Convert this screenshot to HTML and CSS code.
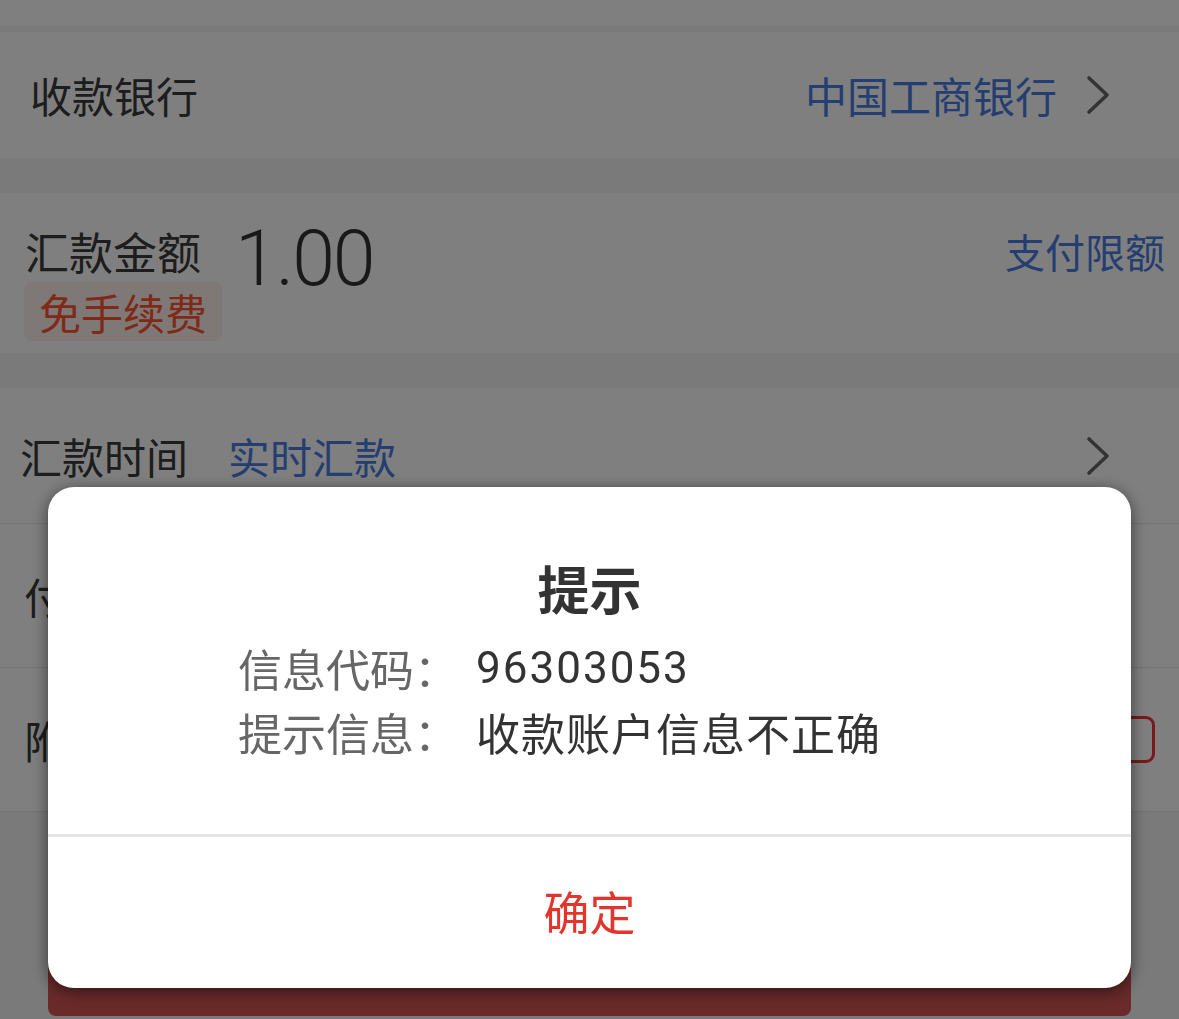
FILE: index.html
```html
<!DOCTYPE html>
<html lang="zh-CN">
<head>
<meta charset="utf-8">
<title>汇款</title>
<link rel="stylesheet" href="styles.css">
</head>
<body>
<div class="page">
  <div class="strip"></div>
  <div class="row row-bank">
    <span class="label">收款银行</span>
    <span class="right">
      <span class="link">中国工商银行</span>
      <svg class="chev" viewBox="0 0 26 40" width="26" height="40"><polyline points="4,3 22,20 4,37" fill="none" stroke="#666" stroke-width="3.6" stroke-linecap="round" stroke-linejoin="round"/></svg>
    </span>
  </div>
  <div class="row row-amount">
    <div class="amount-left">
      <div class="amount-line">
        <span class="label">汇款金额</span>
        <span class="amount">1.00</span>
      </div>
      <span class="badge">免手续费</span>
    </div>
    <span class="link limit">支付限额</span>
  </div>
  <div class="group">
    <div class="row row-time">
      <span class="time-left">
        <span class="label">汇款时间</span>
        <span class="link">实时汇款</span>
      </span>
      <svg class="chev" viewBox="0 0 26 40" width="26" height="40"><polyline points="4,3 22,20 4,37" fill="none" stroke="#666" stroke-width="3.6" stroke-linecap="round" stroke-linejoin="round"/></svg>
    </div>
    <div class="row row-plain">
      <span class="label">付款账户</span>
    </div>
    <div class="row row-plain row-note">
      <span class="label">附言</span>
      <span class="outline-box"></span>
    </div>
  </div>
  <div class="submit"></div>
</div>

<div class="mask"></div>

<div class="dialog">
  <div class="dialog-body">
    <div class="dialog-title">提示</div>
    <div class="dialog-line"><span class="dl-label">信息代码：</span><span class="dl-value num">96303053</span></div>
    <div class="dialog-line"><span class="dl-label">提示信息：</span><span class="dl-value msg">收款账户信息不正确</span></div>
  </div>
  <div class="dialog-btn">确定</div>
</div>
</body>
</html>
```

FILE: styles.css
```css
html, body {
  margin: 0;
  padding: 0;
}
body {
  width: 1179px;
  height: 1019px;
  overflow: hidden;
  background: #f4f4f4;
  font-family: "Noto Sans CJK SC", "Noto Sans", sans-serif;
  color: #3a3a3a;
}
.page {
  display: flex;
  flex-direction: column;
}
.strip {
  height: 26px;
  background: #fff;
  margin-bottom: 6px;
}
.row {
  background: #fff;
  display: flex;
  align-items: center;
  box-sizing: border-box;
}
.label {
  font-size: 42px;
  line-height: 44px;
  color: #3a3a3a;
}
.link {
  font-size: 42px;
  line-height: 44px;
  color: #4a7de2;
}
.chev {
  display: block;
  flex: none;
}
.row-bank {
  height: 126px;
  justify-content: space-between;
  padding: 0 68px 0 30px;
  margin-bottom: 35px;
}
.row-bank .right {
  display: flex;
  align-items: center;
  gap: 28px;
}
.row-amount {
  height: 160px;
  align-items: flex-start;
  justify-content: space-between;
  padding: 36px 14px 0 24px;
  margin-bottom: 35px;
}
.amount-left {
  display: flex;
  flex-direction: column;
  align-items: flex-start;
}
.amount-line {
  display: flex;
  align-items: flex-start;
  height: 44px;
}
.amount-line .label {
  padding-left: 1px;
  font-size: 44px;
}
.amount {
  font-family: Roboto, "Liberation Sans", sans-serif;
  font-weight: 300;
  font-size: 77px;
  line-height: 77px;
  letter-spacing: -2px;
  color: #333;
  margin-left: 34px;
  margin-top: -8px;
}
.badge {
  margin-top: 9px;
  height: 59px;
  box-sizing: border-box;
  padding: 0 15px;
  display: flex;
  align-items: center;
  border-radius: 8px;
  background: #fdf1ee;
  color: #ff5533;
  font-size: 42px;
  line-height: 44px;
}
.limit {
  font-size: 40px;
}
.group .row {
  border-bottom: 1px solid #e6e6e6;
}
.row-time {
  height: 136px;
  justify-content: space-between;
  padding: 0 68px 0 20px;
}
.time-left {
  display: flex;
  align-items: center;
  gap: 40px;
}
.row-plain {
  height: 144px;
  padding: 0 24px 0 24px;
  justify-content: space-between;
}
.row-note .label {
  font-size: 44px;
}
.outline-box {
  width: 92px;
  height: 47px;
  box-sizing: border-box;
  border: 3px solid #f03434;
  border-radius: 9px;
}
.submit {
  margin: 108px 48px 0 48px;
  height: 96px;
  border-radius: 8px;
  background: #d45454;
}
.mask {
  position: fixed;
  inset: 0;
  background: rgba(0, 0, 0, 0.5);
}
.dialog {
  position: fixed;
  left: 48px;
  top: 487px;
  width: 1083px;
  height: 501px;
  background: #fff;
  border-radius: 26px;
  box-shadow: 0 3px 16px rgba(0, 0, 0, 0.55);
  display: flex;
  flex-direction: column;
  overflow: hidden;
}
.dialog-body {
  padding: 69px 0 70px 190px;
  border-bottom: 3px solid #e5e5e5;
}
.dialog-title {
  margin-left: -190px;
  text-align: center;
  font-size: 52px;
  line-height: 64px;
  font-weight: 700;
  color: #333;
  margin-bottom: 16px;
}
.dialog-line {
  display: flex;
  font-size: 44px;
  line-height: 64px;
}
.dl-label {
  color: #666;
  width: 238px;
  flex: none;
}
.dl-value {
  color: #333;
}
.dl-value.msg {
  letter-spacing: 1px;
}
.dl-value.num {
  font-family: Roboto, "Noto Sans", sans-serif;
  letter-spacing: 2px;
}
.dialog-btn {
  flex: 1;
  display: flex;
  align-items: center;
  justify-content: center;
  font-size: 46px;
  color: #e2352b;
  padding-bottom: 6px;
}
```
